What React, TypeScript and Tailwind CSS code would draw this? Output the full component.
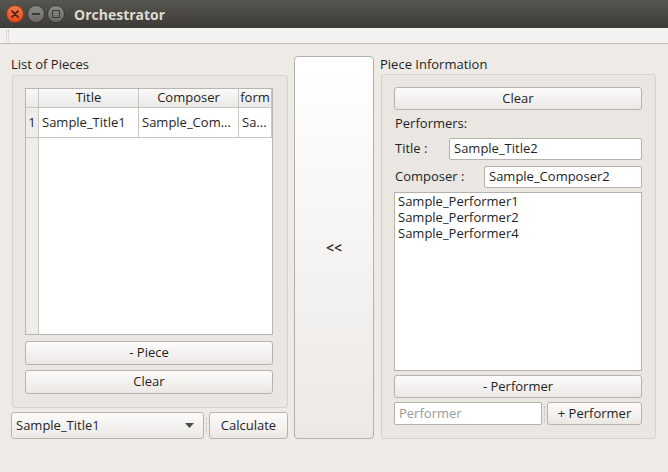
import type { ReactNode } from 'react'

const btnBase =
  'rounded-[3px] border border-[#b7b3ad] bg-gradient-to-b from-[#fdfcfb] to-[#ebe8e4] text-[#1f1f1f] flex items-center'
const btn = `${btnBase} justify-center`

const input =
  'rounded-[2px] border border-[#b5b1ab] bg-white px-[4px] flex items-center text-[#1f1f1f]'

function GroupBox({ title, children, className }: { title: string; children: ReactNode; className?: string }) {
  return (
    <div className={`flex flex-col ${className ?? ''}`}>
      <div className="h-[19px] leading-[16px]">{title}</div>
      <div className="flex-1 ml-[1px] rounded-[3px] border border-[#d6d2cd] bg-[#eae7e3] flex flex-col">
        {children}
      </div>
    </div>
  )
}

function Grip() {
  return <div className="w-[1px] mx-[2px] self-center h-[16px] border-l border-dotted border-[#c3bfba]" />
}

export default function App() {
  return (
    <div
      className="w-[668px] h-[472px] flex flex-col bg-[#eeebe7] text-[13px] text-[#1f1f1f] overflow-hidden"
      style={{ fontFamily: '"Open Sans", "DejaVu Sans", sans-serif' }}
    >
      {/* title bar */}
      <div className="h-[28px] bg-gradient-to-b from-[#56554f] to-[#3c3b37] flex items-center pl-[6px]">
        <div className="w-[18px] h-[18px] rounded-full bg-gradient-to-b from-[#f4784a] to-[#df4b16] border border-[#8f3b1a] flex items-center justify-center">
          <svg width="8" height="8" viewBox="0 0 8 8">
            <path d="M1 1L7 7M7 1L1 7" stroke="#3a1a0e" strokeWidth="1.6" strokeLinecap="round" />
          </svg>
        </div>
        <div className="ml-[3px] w-[18px] h-[18px] rounded-full bg-gradient-to-b from-[#8a8982] to-[#6a6964] border border-[#3a3935] flex items-center justify-center">
          <div className="w-[8px] h-[2px] bg-[#3a3935]" />
        </div>
        <div className="ml-[2px] w-[18px] h-[18px] rounded-full bg-gradient-to-b from-[#8a8982] to-[#6a6964] border border-[#3a3935] flex items-center justify-center">
          <div className="w-[8px] h-[8px] border-[1.5px] border-[#3a3935] rounded-[1px]" />
        </div>
        <div className="ml-[9px] text-[14px] font-bold text-[#dfdbd2]">Orchestrator</div>
      </div>

      {/* tool strip */}
      <div className="h-[16px] bg-[#f3f2f0] border-b border-[#c2bfbb] flex items-center pl-[6px]">
        <div className="h-[12px] w-[3px] border-x border-dotted border-[#c9c6c2]" />
      </div>

      {/* body */}
      <div className="flex pt-[12px] pl-[11px]">
        {/* left */}
        <div className="w-[277px] flex flex-col">
          <GroupBox title="List of Pieces" className="h-[352px]">
            <div className="flex flex-col pt-[12px] pl-[12px] pr-[14px] pb-[13px] flex-1">
              <div className="h-[247px] border border-[#b9b5b0] bg-white flex">
                <div className="w-[13px] bg-[#efedea] border-r border-[#c9c5c0] flex flex-col">
                  <div className="h-[19px] border-b border-[#c9c5c0] bg-gradient-to-b from-[#fafaf9] to-[#ebe9e6]" />
                  <div className="h-[30px] border-b border-[#c9c5c0] flex items-center justify-center">1</div>
                </div>
                <div className="flex-1 flex flex-col">
                  <div className="h-[19px] flex border-b border-[#c9c5c0] bg-gradient-to-b from-[#fafaf9] to-[#ebe9e6]">
                    <div className="w-[100px] border-r border-[#c9c5c0] flex items-center justify-center">Title</div>
                    <div className="w-[100px] border-r border-[#c9c5c0] flex items-center justify-center">Composer</div>
                    <div className="flex-1 border-r border-[#c9c5c0] flex items-center justify-center">form</div>
                  </div>
                  <div className="h-[30px] flex border-b border-[#c9c5c0]">
                    <div className="w-[100px] border-r border-[#c9c5c0] flex items-center pl-[3px]">Sample_Title1</div>
                    <div className="w-[100px] border-r border-[#c9c5c0] flex items-center pl-[3px] overflow-hidden whitespace-nowrap">Sample_Com...</div>
                    <div className="flex-1 border-r border-[#c9c5c0] flex items-center pl-[3px] overflow-hidden whitespace-nowrap">Sa...</div>
                  </div>
                </div>
              </div>
              <div className={`${btn} h-[24px] mt-[6px]`}>- Piece</div>
              <div className={`${btn} h-[24px] mt-[5px]`}>Clear</div>
            </div>
          </GroupBox>
          <div className="flex mt-[4px] h-[27px]">
            <div className={`${btnBase} w-[193px] justify-between pl-[4px] pr-[9px]`}>
              <span>Sample_Title1</span>
              <svg width="9" height="5" viewBox="0 0 9 5">
                <path d="M0 0H9L4.5 5Z" fill="#4a4a4a" />
              </svg>
            </div>
            <Grip />
            <div className={`${btn} w-[79px]`}>Calculate</div>
          </div>
        </div>

        {/* middle */}
        <div className="ml-[6px] w-[80px] h-[383px] rounded-[4px] border border-[#b3afa9] bg-gradient-to-b from-[#ffffff] to-[#ece9e5] flex items-center justify-center text-[14px] font-semibold">
          &lt;&lt;
        </div>

        {/* right */}
        <GroupBox title="Piece Information" className="ml-[6px] w-[276px] h-[383px]">
          <div className="flex flex-col pt-[12px] pl-[12px] pr-[13px] pb-[13px] flex-1">
            <div className={`${btn} h-[23px]`}>Clear</div>
            <div className="h-[28px] flex items-center pl-[1px]">Performers:</div>
            <div className="flex items-center h-[22px]">
              <div className="w-[55px] pl-[1px]">Title :</div>
              <div className={`${input} flex-1 h-[22px]`}>Sample_Title2</div>
            </div>
            <div className="flex items-center h-[22px] mt-[6px]">
              <div className="w-[90px] pl-[1px]">Composer :</div>
              <div className={`${input} flex-1 h-[22px]`}>Sample_Composer2</div>
            </div>
            <div className="mt-[4px] h-[179px] border border-[#b5b1ab] bg-white px-[3px] leading-[16px]">
              <div>Sample_Performer1</div>
              <div>Sample_Performer2</div>
              <div>Sample_Performer4</div>
            </div>
            <div className={`${btn} h-[23px] mt-[4px]`}>- Performer</div>
            <div className="flex h-[23px] mt-[4px]">
              <div className={`${input} w-[148px] text-[#9a9a9a]`}>Performer</div>
              <Grip />
              <div className={`${btn} flex-1`}>+ Performer</div>
            </div>
          </div>
        </GroupBox>
      </div>
    </div>
  )
}
